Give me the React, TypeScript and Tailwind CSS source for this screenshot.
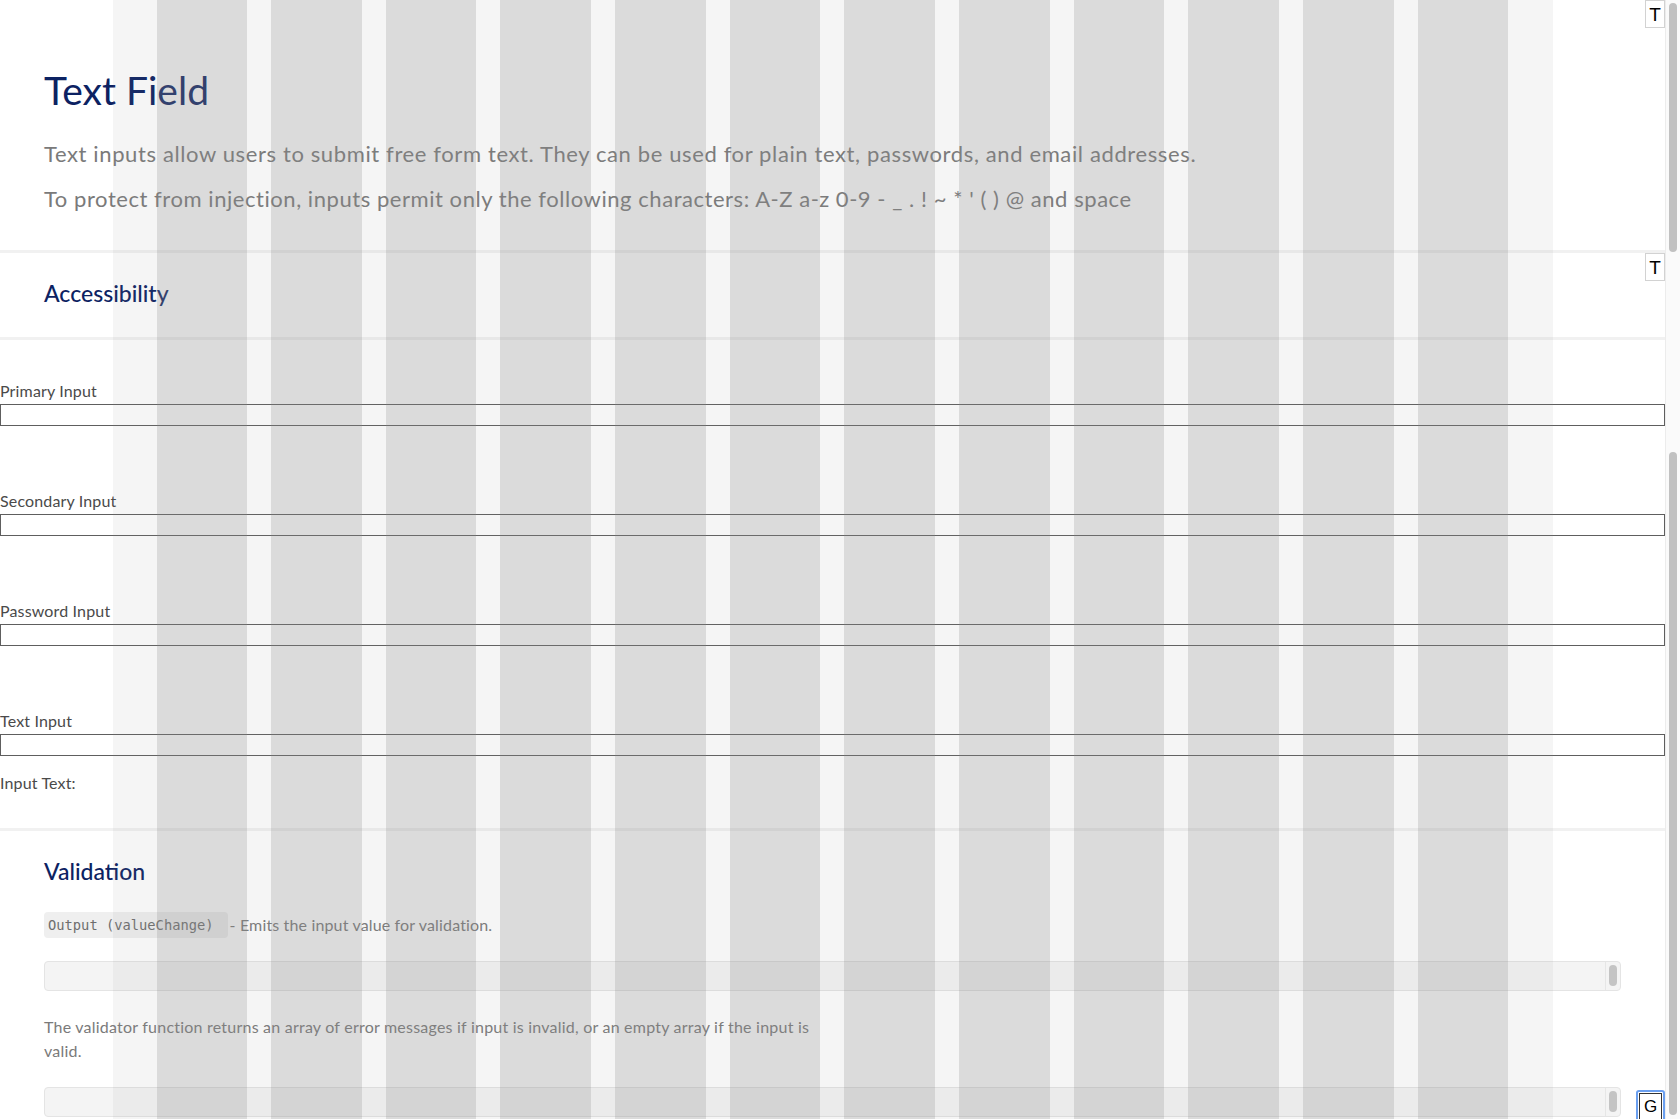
import React from "react";

const NAVY = "text-[#0c2262]";

function TButton() {
  return (
    <div className="absolute right-0 top-0 w-[20px] h-[28px] bg-white border border-[#d2d2d2] flex items-center justify-center text-[19px] text-black font-['Liberation_Sans',sans-serif] leading-none">
      T
    </div>
  );
}

function Field({ label }: { label: string }) {
  return (
    <div className="flex flex-col">
      <label className="text-[16px] leading-[20px] tracking-[0.15px] text-[#4a4a4a]">{label}</label>
      <input className="mt-[3px] h-[22px] w-full border border-[#5e5e5e] bg-transparent outline-none" />
    </div>
  );
}

function CodeBox() {
  return (
    <div className="flex h-[30px] rounded-[4px] border border-[#e4e4e4] bg-[#f4f4f4]">
      <div className="flex-1" />
      <div className="w-[15px] border-l border-[#e6e6e6] flex justify-center pt-[3px]">
        <div className="w-[8px] h-[21px] rounded-full bg-[#c4c4c4]" />
      </div>
    </div>
  );
}

function GridOverlay() {
  const cols = Array.from({ length: 12 });
  return (
    <div className="pointer-events-none absolute inset-0 flex justify-center">
      <div className="w-[1440px] h-full px-[44px] bg-[rgba(140,140,140,0.09)] grid grid-cols-12 gap-[24px]">
        {cols.map((_, i) => (
          <div key={i} className="h-full bg-[rgba(140,140,140,0.24)]" />
        ))}
      </div>
    </div>
  );
}

export default function App() {
  return (
    <div className="flex h-[1119px] w-[1680px] overflow-hidden bg-white font-['Lato',sans-serif]">
      <main className="relative flex-1 min-w-0">
        {/* Header */}
        <section className="relative h-[250px] px-[44px] pt-[66px]">
          <h1 className={`text-[39px] leading-[48px] ${NAVY} font-normal`}>Text Field</h1>
          <p className="mt-[25px] text-[22px] leading-[30px] tracking-[0.62px] text-[#7a7a7a]">
            Text inputs allow users to submit free form text. They can be used for plain text, passwords, and email addresses.
          </p>
          <p className="mt-[15px] text-[22px] leading-[30px] tracking-[0.55px] text-[#7a7a7a]">
            To protect from injection, inputs permit only the following characters: A-Z a-z 0-9 - _ . ! ~ * ' ( ) @ and space
          </p>
          <TButton />
        </section>
        <div className="h-[3px] bg-[#f1f1f1]" />

        {/* Accessibility */}
        <section className="relative h-[84px] px-[44px] pt-[26px]">
          <h2 className={`text-[23px] leading-[28px] font-medium ${NAVY}`}>Accessibility</h2>
          <TButton />
        </section>
        <div className="h-[3px] bg-[#f1f1f1]" />

        {/* Inputs */}
        <section className="h-[488px] pt-[41px] flex flex-col gap-[65px]">
          <Field label="Primary Input" />
          <Field label="Secondary Input" />
          <Field label="Password Input" />
          <div className="flex flex-col">
            <Field label="Text Input" />
            <div className="mt-[17px] text-[16px] leading-[20px] tracking-[0.15px] text-[#4a4a4a]">Input Text:</div>
          </div>
        </section>
        <div className="h-[3px] bg-[#f1f1f1]" />

        {/* Validation */}
        <section className="px-[44px] pt-[26px]">
          <h2 className={`text-[23px] leading-[28px] font-medium ${NAVY}`}>Validation</h2>
          <div className="mt-[27px] flex items-center h-[26px]">
            <code className="h-[26px] flex items-center rounded-[4px] bg-[#efefef] px-[4px] pr-[14px] text-[13.75px] text-[#6e6e6e] font-['DejaVu_Sans_Mono',monospace]">
              Output (valueChange)
            </code>
            <span className="ml-[2px] text-[16px] tracking-[0.15px] text-[#7a7a7a]">- Emits the input value for validation.</span>
          </div>
          <div className="mt-[23px]">
            <CodeBox />
          </div>
          <p className="mt-[24px] max-w-[790px] text-[16px] leading-[24px] tracking-[0.22px] text-[#7a7a7a]">
            The validator function returns an array of error messages if input is invalid, or an empty array if the input is valid.
          </p>
          <div className="mt-[24px]">
            <CodeBox />
          </div>
        </section>

        <GridOverlay />

        <div className="absolute right-0 top-[1090px] w-[29px] h-[33px] rounded-[3px] border-[2px] border-[#6a9ff0] bg-white p-[1px]">
          <div className="w-full h-full border border-[#333] bg-white flex items-center justify-center text-[17px] text-black font-['Liberation_Sans',sans-serif]">
            G
          </div>
        </div>
      </main>

      {/* fake scrollbar */}
      <div className="w-[15px] h-full bg-[#fafafa] border-l border-[#ececec] flex flex-col items-center pt-[3px]">
        <div className="w-[8px] h-[249px] rounded-full bg-[#c1c1c1]" />
        <div className="h-[200px]" />
        <div className="w-[8px] h-[663px] rounded-full bg-[#c1c1c1]" />
      </div>
    </div>
  );
}
